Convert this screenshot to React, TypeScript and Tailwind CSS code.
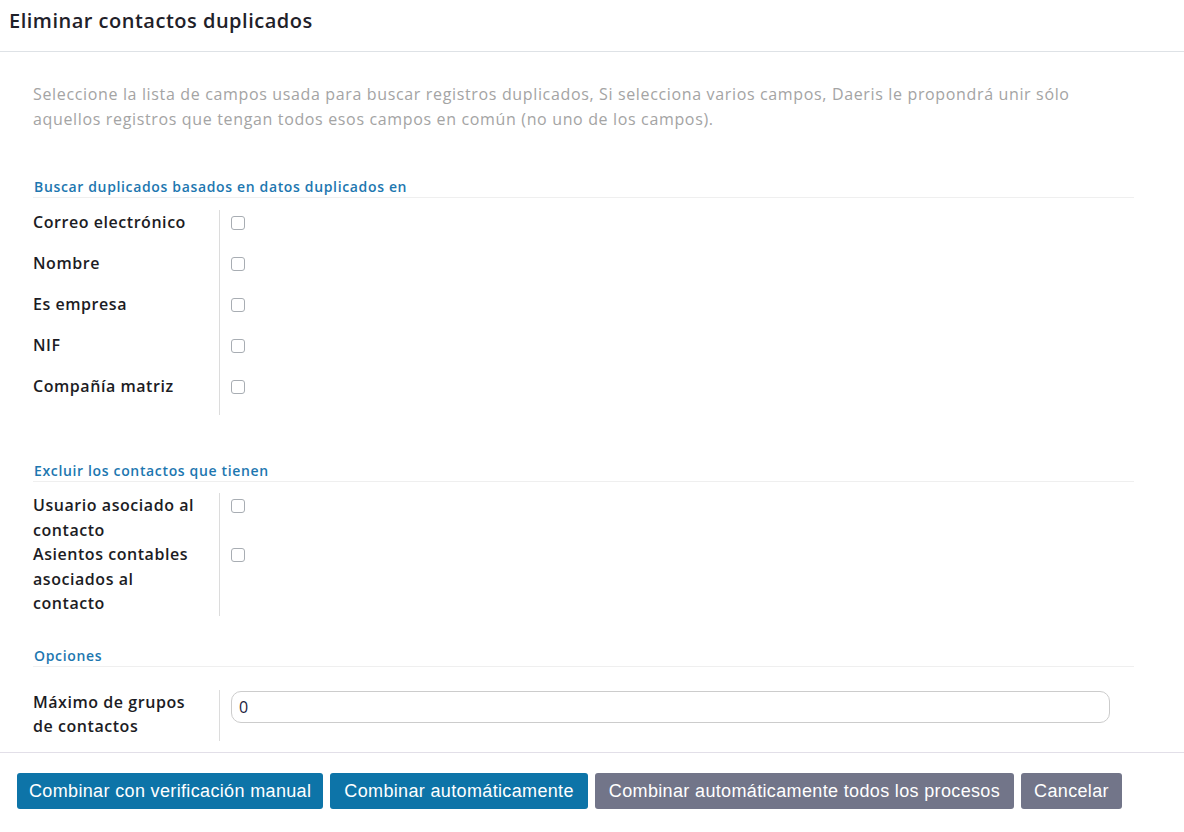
import { useState } from 'react'

type Field = { label: string; checked?: boolean }

const duplicateFields: Field[] = [
  { label: 'Correo electrónico' },
  { label: 'Nombre' },
  { label: 'Es empresa' },
  { label: 'NIF' },
  { label: 'Compañía matriz' },
]

const excludeFields: Field[] = [
  { label: 'Usuario asociado al contacto' },
  { label: 'Asientos contables asociados al contacto' },
]

function SectionTitle({ children }: { children: React.ReactNode }) {
  return (
    <div className="border-b border-[#efefef] pl-[1px] pt-[2px] text-[14px] font-semibold leading-[20px] tracking-[0.65px] text-[#1d77b0]">
      {children}
    </div>
  )
}

function CheckRow({ label }: Field) {
  const [checked, setChecked] = useState(false)
  return (
    <div className="flex min-h-[41px]">
      <div className="w-[187px] shrink-0 border-r border-[#dcdcdc] pr-3 text-[16px] font-semibold leading-[24.5px] tracking-[0.55px] text-[#1c1c24]">
        {label}
      </div>
      <div className="pl-[11px] pt-[6px]">
        <button
          onClick={() => setChecked(!checked)}
          className={
            'block h-[14px] w-[14px] rounded-[3px] border ' +
            (checked ? 'border-[#0d74a8] bg-[#0d74a8]' : 'border-[#a8adb3] bg-white')
          }
        />
      </div>
    </div>
  )
}

export default function App() {
  const [maxGroups, setMaxGroups] = useState('0')

  return (
    <div className="flex h-[832px] w-full flex-col bg-white" style={{ fontFamily: '"Open Sans", sans-serif' }}>
      {/* Header */}
      <div className="h-[52px] shrink-0 border-b border-[#dee2e6] px-[9px] pt-[8px]">
        <h1 className="text-[20px] font-semibold leading-[26px] tracking-[0.5px] text-[#1f2129]">
          Eliminar contactos duplicados
        </h1>
      </div>

      {/* Body */}
      <div className="flex-1 pl-[33px] pr-[50px] pt-[30px]">
        <p className="pr-[40px] text-[16px] leading-[25px] tracking-[0.65px] text-[#a4a4a4]">
          Seleccione la lista de campos usada para buscar registros duplicados, Si selecciona varios campos, Daeris le
          propondrá unir sólo aquellos registros que tengan todos esos campos en común (no uno de los campos).
        </p>

        <div className="mt-[43px]">
          <SectionTitle>Buscar duplicados basados en datos duplicados en</SectionTitle>
          <div className="mt-[12px]">
            {duplicateFields.map((f) => (
              <CheckRow key={f.label} label={f.label} />
            ))}
          </div>
        </div>

        <div className="mt-[44px]">
          <SectionTitle>Excluir los contactos que tienen</SectionTitle>
          <div className="mt-[11px]">
            {excludeFields.map((f) => (
              <CheckRow key={f.label} label={f.label} />
            ))}
          </div>
        </div>

        <div className="mt-[28px]">
          <SectionTitle>Opciones</SectionTitle>
          <div className="mt-[23px] flex">
            <div className="w-[187px] shrink-0 border-r border-[#dcdcdc] pb-[2px] pr-3 text-[16px] font-semibold leading-[24.5px] tracking-[0.55px] text-[#1c1c24]">
              Máximo de grupos de contactos
            </div>
            <div className="flex-1 pl-[11px] pr-[24px] pt-[1px]">
              <input
                value={maxGroups}
                onChange={(e) => setMaxGroups(e.target.value)}
                className="h-[32px] w-full rounded-[10px] border border-[#cccccc] px-[7px] text-[16px] text-[#1c2340] outline-none"
              />
            </div>
          </div>
        </div>
      </div>

      {/* Footer */}
      <div
        className="flex h-[80px] shrink-0 items-start gap-[7px] border-t border-[#e2dfe8] px-[17px] pt-[20px]"
        style={{ fontFamily: '"Liberation Sans", Arial, sans-serif' }}
      >
        <button className="h-[36px] rounded-[3px] bg-[#0d74a8] px-[12px] text-[18px] tracking-[0.35px] text-white">
          Combinar con verificación manual
        </button>
        <button className="h-[36px] rounded-[3px] bg-[#0d74a8] px-[14px] text-[18px] tracking-[0.35px] text-white">
          Combinar automáticamente
        </button>
        <button className="h-[36px] rounded-[3px] bg-[#727589] px-[14px] text-[18px] tracking-[0.35px] text-white">
          Combinar automáticamente todos los procesos
        </button>
        <button className="h-[36px] rounded-[3px] bg-[#727589] px-[13px] text-[18px] tracking-[0.35px] text-white">
          Cancelar
        </button>
      </div>
    </div>
  )
}
